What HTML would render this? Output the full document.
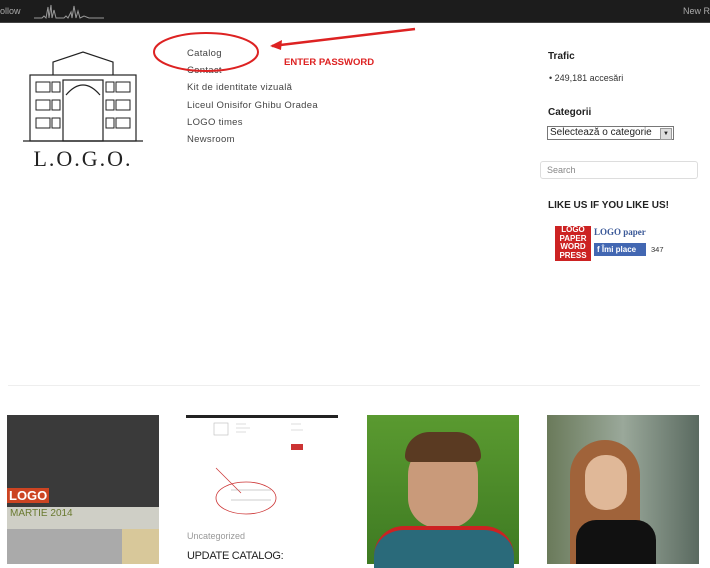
<!DOCTYPE html>
<html><head><meta charset="utf-8"><style>
body{margin:0;width:710px;height:564px;overflow:hidden;background:#fff;font-family:"Liberation Sans",sans-serif;position:relative}
.a{position:absolute}
.bar{left:0;top:0;width:710px;height:22px;background:#1c1c1c;border-bottom:1px solid #444}
.nav div{font-size:9.5px;color:#444;height:17.2px;letter-spacing:.3px}
</style></head><body>
<div class="a bar"></div>
<div class="a" style="left:0;top:6px;font-size:9px;color:#aaa">ollow</div>
<svg class="a" style="left:34px;top:2px" width="72" height="18"><polyline points="0,16 8,16 10,14 12,16 14,5 15,16 17,3 18,16 20,8 22,16 30,16 32,14 34,16 37,10 38,16 40,4 42,16 44,9 46,16 50,14 55,16 70,16" fill="none" stroke="#999" stroke-width="1"/></svg>
<div class="a" style="right:0;top:6px;font-size:9px;color:#aaa">New R</div>

<svg class="a" style="left:8px;top:50px" width="150" height="125" viewBox="0 0 150 125">
<g fill="none" stroke="#222" stroke-width="1.2">
<rect x="22" y="25" width="106" height="66"/><path d="M45 25 L45 12 L75 2 L105 12 L105 25"/><rect x="55" y="30" width="40" height="61"/><path d="M58 45 Q75 25 92 45"/>
<g stroke-width="1"><rect x="28" y="32" width="14" height="10"/><rect x="28" y="50" width="14" height="10"/><rect x="28" y="68" width="14" height="10"/><rect x="108" y="32" width="14" height="10"/><rect x="108" y="50" width="14" height="10"/><rect x="108" y="68" width="14" height="10"/><rect x="44" y="32" width="8" height="10"/><rect x="44" y="50" width="8" height="10"/><rect x="44" y="68" width="8" height="10"/><rect x="98" y="32" width="8" height="10"/><rect x="98" y="50" width="8" height="10"/><rect x="98" y="68" width="8" height="10"/></g>
<path d="M15 91 L135 91"/></g>
<text x="75" y="116" font-family="Liberation Serif" font-size="22" text-anchor="middle" fill="#222" letter-spacing="2">L.O.G.O.</text>
</svg>

<div class="a nav" style="left:187px;top:48px">
<div>Catalog</div><div>Contact</div><div>Kit de identitate vizuală</div><div>Liceul Onisifor Ghibu Oradea</div><div>LOGO times</div><div>Newsroom</div></div>
<svg class="a" style="left:150px;top:25px" width="280" height="50"><ellipse cx="56" cy="27" rx="52" ry="19" fill="none" stroke="#d22" stroke-width="2"/><path d="M265 4 L122 21" stroke="#d22" stroke-width="2.5"/><path d="M120 21 L132 15 L131 25 Z" fill="#d22"/></svg>
<div class="a" style="left:284px;top:57px;font-size:9.5px;font-weight:bold;color:#d22">ENTER PASSWORD</div>

<div class="a" style="left:548px;top:51px;font-size:10px;font-weight:bold;color:#222">Trafic</div>
<div class="a" style="left:549px;top:73px;font-size:9px;color:#333">• 249,181 accesări</div>
<div class="a" style="left:548px;top:107px;font-size:10px;font-weight:bold;color:#222">Categorii</div>
<div class="a" style="left:547px;top:126px;width:127px;height:14px;border:1px solid #777;font-size:10px;color:#222;box-sizing:border-box;padding-left:2px;line-height:12px">Selectează o categorie<span style="position:absolute;right:1px;top:1px;width:10px;height:10px;background:#ddd;border:1px solid #999;font-size:6px;text-align:center;line-height:10px">▼</span></div>
<div class="a" style="left:540px;top:161px;width:158px;height:18px;border:1px solid #ddd;border-radius:3px;font-size:9px;color:#888;box-sizing:border-box;padding:3px 6px">Search</div>
<div class="a" style="left:548px;top:200px;font-size:10px;font-weight:bold;color:#222">LIKE US IF YOU LIKE US!</div>
<div class="a" style="left:555px;top:226px;width:36px;height:35px;background:#c22;color:#fff;font-size:8px;font-weight:bold;line-height:8.5px;text-align:center">LOGO<br>PAPER<br>WORD<br>PRESS</div>
<div class="a" style="left:594px;top:227px;font-family:'Liberation Serif';font-size:9px;font-weight:bold;color:#3b5998">LOGO paper</div>
<div class="a" style="left:594px;top:243px;width:52px;height:13px;background:#4267b2;color:#fff;font-size:8px;font-weight:bold;line-height:13px;padding-left:3px;box-sizing:border-box">f Îmi place</div>
<div class="a" style="left:651px;top:245px;font-size:7.5px;color:#333">347</div>

<div class="a" style="left:8px;top:385px;width:692px;height:1px;background:#eee"></div>

<div class="a" style="left:7px;top:415px;width:152px;height:92px;background:#3a3a3a"></div>
<div class="a" style="left:7px;top:488px;background:#c42;color:#fff;font-weight:bold;font-size:13px;padding:0 2px">LOGO</div>
<div class="a" style="left:7px;top:507px;width:152px;height:57px;background:#cfcfc6"></div>
<div class="a" style="left:10px;top:508px;font-size:10px;color:#6a7a30">MARTIE 2014</div>
<div class="a" style="left:7px;top:529px;width:152px;height:35px;background:#aaa"></div>
<div class="a" style="left:122px;top:529px;width:37px;height:35px;background:#d8c89a"></div>

<div class="a" style="left:186px;top:415px;width:152px;height:3px;background:#222"></div>
<svg class="a" style="left:186px;top:418px" width="152" height="100"><g fill="none" stroke="#bbb" stroke-width=".6"><rect x="28" y="5" width="14" height="12"/><path d="M50 6h10M50 10h14M50 14h10M105 6h10M105 12h12"/></g><rect x="105" y="26" width="12" height="6" fill="#c33"/><path d="M30 50 L55 75" stroke="#c33" stroke-width=".7"/><ellipse cx="60" cy="80" rx="30" ry="16" fill="none" stroke="#c33" stroke-width=".8"/><path d="M45 72h40M45 82h40" stroke="#999" stroke-width=".6"/></svg>
<div class="a" style="left:187px;top:531px;font-size:9px;color:#999">Uncategorized</div>
<div class="a" style="left:187px;top:550px;font-size:11px;color:#222;letter-spacing:-.3px">UPDATE CATALOG:</div>

<div class="a" style="left:367px;top:415px;width:152px;height:149px;background:linear-gradient(#5a9a30,#3e7a22)"></div>
<div class="a" style="left:408px;top:440px;width:70px;height:88px;background:#c99a7a;border-radius:35px 35px 30px 30px"></div>
<div class="a" style="left:405px;top:432px;width:76px;height:30px;background:#5a3a22;border-radius:35px 35px 8px 8px"></div>
<div class="a" style="left:374px;top:526px;width:140px;height:38px;background:#2a6a7a;border-radius:30px 30px 0 0;border-top:4px solid #c22"></div>

<div class="a" style="left:547px;top:415px;width:152px;height:149px;background:linear-gradient(90deg,#6a7a5a,#9aa89a,#5a6a60)"></div>
<div class="a" style="left:570px;top:440px;width:70px;height:124px;background:#a0633a;border-radius:35px 35px 0 0"></div>
<div class="a" style="left:585px;top:455px;width:42px;height:55px;background:#e0b898;border-radius:20px"></div>
<div class="a" style="left:576px;top:520px;width:80px;height:44px;background:#111;border-radius:20px 20px 0 0"></div>
</body></html>
